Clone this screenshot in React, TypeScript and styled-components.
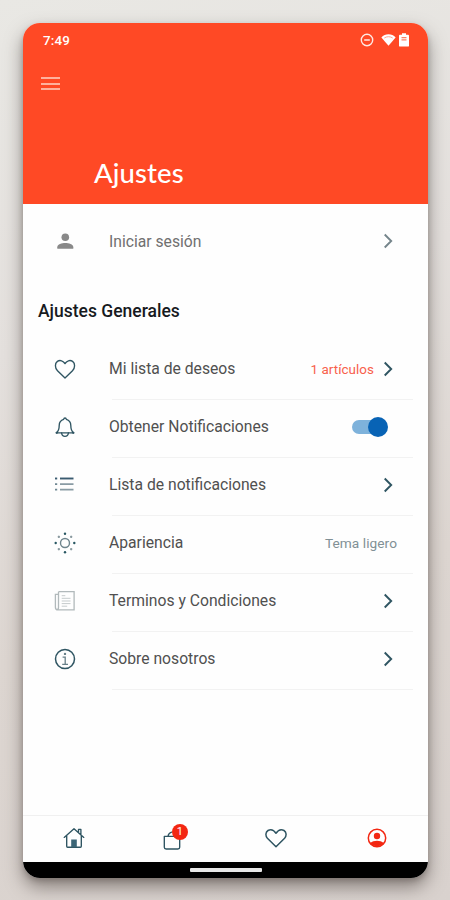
import React from "react";
import styled, { createGlobalStyle } from "styled-components";

const INK = "#2f5562";
const RED = "#f32712";

const GlobalStyle = createGlobalStyle`
  * { box-sizing: border-box; }
  body { margin: 0; font-family: Roboto, "Liberation Sans", sans-serif; }
  svg { display: block; flex: none; }
`;

const Stage = styled.main`
  width: 450px;
  height: 900px;
  padding: 23px 22px 22px 23px;
  overflow: hidden;
  background: linear-gradient(165deg, #e9e8e4 0%, #e4e0dd 35%, #ddd6d1 65%, #d9d2ce 100%);
`;

const Phone = styled.div`
  width: 405px;
  height: 855px;
  display: flex;
  flex-direction: column;
  overflow: hidden;
  border-radius: 17px;
  background: #fefefe;
  box-shadow: 0 9px 18px rgba(70, 60, 56, 0.55), 0 3px 5px rgba(70, 60, 56, 0.25);
`;

const Header = styled.header`
  height: 181px;
  flex: none;
  display: flex;
  flex-direction: column;
  background: #ff4925;
  color: #fff;
`;

const StatusBar = styled.div`
  height: 34px;
  padding: 0 19px 0 20px;
  display: flex;
  align-items: center;
`;

const Clock = styled.span`
  flex: 1;
  padding-top: 1px;
  font-size: 13.4px;
  line-height: 14px;
  font-weight: 500;
  letter-spacing: 0.2px;
`;

const StatusIcons = styled.div`
  display: flex;
  align-items: center;
  gap: 3px;

  svg:first-child {
    margin-right: 4px;
  }
`;

const MenuButton = styled.div`
  width: 19px;
  height: 13px;
  margin: 20px 0 0 18px;
  display: flex;
  flex-direction: column;
  justify-content: space-between;
`;

const MenuLine = styled.span`
  height: 2px;
  background: #ffb19d;
`;

const Title = styled.h1`
  margin: auto 0 14px 71px;
  font-family: Lato, "Open Sans", sans-serif;
  font-size: 27.5px;
  line-height: 34px;
  font-weight: 500;
  letter-spacing: 0.1px;
`;

const Content = styled.section`
  flex: 1;
`;

const Row = styled.div<{ $height: number }>`
  height: ${(p) => p.$height}px;
  padding-left: 30px;
  display: flex;
  align-items: stretch;
`;

const IconCell = styled.div<{ $lift?: boolean }>`
  width: 24px;
  padding-bottom: ${(p) => (p.$lift ? 5 : 0)}px;
  display: flex;
  align-items: center;
  justify-content: center;
`;

const RowBody = styled.div<{ $divided?: boolean }>`
  flex: 1;
  margin: 0 15px 0 35px;
  padding: 0 16px ${(p) => (p.$divided ? 3 : 0)}px 0;
  display: flex;
  align-items: center;
  justify-content: space-between;
  border-bottom: ${(p) => (p.$divided ? "1px solid #f2f2f2" : "none")};
`;

const Label = styled.span<{ $soft?: boolean }>`
  margin-left: -3px;
  padding-top: ${(p) => (p.$soft ? 1 : 0)}px;
  font-size: 15.7px;
  line-height: 20px;
  color: ${(p) => (p.$soft ? "#707070" : "#505050")};
`;

const Trailing = styled.div`
  display: flex;
  align-items: center;
`;

const Count = styled.span`
  margin-right: 9px;
  font-size: 13.4px;
  letter-spacing: 0.05px;
  color: #f8604c;
`;

const Theme = styled.span`
  font-size: 13.7px;
  letter-spacing: 0.05px;
  color: #819095;
`;

const SectionTitle = styled.h2`
  height: 64px;
  margin: 0;
  padding: 2px 0 0 15px;
  display: flex;
  align-items: center;
  font-size: 17.5px;
  font-weight: 500;
  color: #171a1e;
`;

const Toggle = styled.div`
  margin-right: 9px;
  display: flex;
  align-items: center;
`;

const Track = styled.span`
  width: 26px;
  height: 14px;
  margin-right: -10px;
  border-radius: 7px 0 0 7px;
  background: #7eb2db;
`;

const Knob = styled.span`
  width: 20px;
  height: 20px;
  border-radius: 50%;
  background: #0863b5;
`;

const NavBar = styled.nav`
  height: 47px;
  padding-bottom: 3px;
  display: grid;
  grid-template-columns: repeat(4, 1fr);
  border-top: 1px solid #f0f0f0;
`;

const NavItem = styled.div`
  display: flex;
  align-items: center;
  justify-content: center;
`;

const BagWrap = styled.div`
  position: relative;
  margin: 4px 6px 0 0;
`;

const Badge = styled.span`
  position: absolute;
  left: 9px;
  top: -6px;
  width: 16px;
  height: 16px;
  border-radius: 50%;
  background: ${RED};
  color: #fff;
  font-size: 11px;
  line-height: 16px;
  text-align: center;
`;

const GestureBar = styled.footer`
  height: 16px;
  display: flex;
  justify-content: center;
  align-items: center;
  background: #000;
`;

const GesturePill = styled.span`
  width: 72px;
  height: 4px;
  border-radius: 1px;
  background: #e8e8e8;
`;

const ChevronSvg = styled.svg`
  margin-right: 4px;
`;

const stroke = { fill: "none", stroke: INK, strokeWidth: 1.35, strokeLinejoin: "round" as const, strokeLinecap: "round" as const };

const Chevron = ({ color = INK }: { color?: string }) => (
  <ChevronSvg width="10" height="16" viewBox="0 0 10 16">
    <path d="M1.7 1.5 8.2 8l-6.5 6.5" fill="none" stroke={color} strokeWidth="1.9" />
  </ChevronSvg>
);

const PersonIcon = () => (
  <svg width="24" height="24" viewBox="0 0 24 24" fill="#898989">
    <circle cx="12.3" cy="8.3" r="3.8" />
    <path d="M4.3 19.8v-1.6c0-2.8 4.6-4.1 8-4.1s8 1.3 8 4.1v1.6z" />
  </svg>
);

const HeartIcon = ({ flat }: { flat?: boolean }) => (
  <svg width="22" height="22" viewBox="0 0 22 22">
    <path
      {...stroke}
      strokeWidth={flat ? 1.5 : 1.35}
      d={
        flat
          ? "M11 19.7 2.4 11.2C.2 8.8.5 5 3 3.5c2.8-1.6 6-.2 8 2.7 2-2.9 5.2-4.3 8-2.7 2.5 1.5 2.8 5.3.6 7.7z"
          : "M11 20 3.5 12.7C.7 9.9.8 5.4 3.4 3.4c2.6-1.8 6-.6 7.6 2.2 1.6-2.8 5-4 7.6-2.2 2.6 2 2.7 6.5-.1 9.3z"
      }
    />
  </svg>
);

const BellIcon = () => (
  <svg width="22" height="22" viewBox="0 0 22 22">
    <path {...stroke} d="M9.7 3.3c.2-1.8 2.4-1.8 2.6 0 3 .9 4.5 3.2 4.5 6.1 0 3.9.8 6 3 7.4H2.2c2.2-1.4 3-3.5 3-7.4 0-2.9 1.5-5.2 4.5-6.1z" />
    <path {...stroke} d="M7.6 17c.5 4.5 6.3 4.5 6.8 0" />
    <circle cx="2.8" cy="16.8" r="1.1" fill={INK} />
    <circle cx="19.2" cy="16.8" r="1.1" fill={INK} />
  </svg>
);

const ListIcon = () => (
  <svg width="20" height="16" viewBox="0 0 20 16">
    <path d="M5 1.5h13.5" stroke="#3a5b70" strokeWidth="1.9" />
    <path d="M5 7.1h13.5M5 12.6h13.5" stroke="#899ba4" strokeWidth="1.6" />
    <path d="M0 1.5h2.2" stroke="#3a5b70" strokeWidth="1.9" />
    <path d="M0 7.1h2.2M0 12.6h2.2" stroke="#6f8792" strokeWidth="1.8" />
  </svg>
);

const SUN_DOTS = [0, 45, 90, 135, 180, 225, 270, 315];

const SunIcon = () => (
  <svg width="22" height="22" viewBox="0 0 22 22">
    <circle cx="11" cy="11" r="4.5" fill="none" stroke="#6f858d" strokeWidth="1.4" />
    {SUN_DOTS.map((a) => (
      <circle
        key={a}
        cx="11"
        cy={a % 90 ? 2.3 : 1.7}
        r="1.2"
        fill={a % 90 ? "#8a9aa0" : "#285762"}
        transform={`rotate(${a} 11 11)`}
      />
    ))}
  </svg>
);

const TermsIcon = () => (
  <svg width="22" height="22" viewBox="0 0 22 22" fill="none" stroke="#b1b9bb" strokeWidth="1.3">
    <path d="M4.5 1.7h15.6v18.2H4c-1.8 0-2.6-.9-2.6-2.6V4.4h3M4.5 1.7v15.8c0 1.3-.7 2.1-1.6 2.1" />
    <path d="M7.7 5.7h3.6M7.7 8.3h8.8M7.7 11h8.8M7.7 13.6h8.8M7.7 16.2h5.5" strokeWidth="1" stroke="#c5cbcc" />
  </svg>
);

const InfoIcon = () => (
  <svg width="22" height="22" viewBox="0 0 22 22" fill="none" stroke={INK}>
    <circle cx="11" cy="11" r="9.5" strokeWidth="1.5" />
    <path d="M8.6 9.2h2.6v7M8.2 16.3h5.8" stroke="#677f88" strokeWidth="1.3" />
    <circle cx="11" cy="5.9" r="1.2" fill="#677f88" stroke="none" />
  </svg>
);

const HomeIcon = () => (
  <svg width="22" height="22" viewBox="0 0 22 22">
    <path {...stroke} d="M1.2 10.4 11 1.7l9.8 8.7M3.7 8.5v10.8c0 .6.3.9.9.9h12.8c.6 0 .9-.3.9-.9V8.5M15.5 5V2.4h2.4v4.8" />
    <path d="M8.2 12.5h5.6v7.8H8.2z" fill="#3b6576" />
  </svg>
);

const BagIcon = () => (
  <svg width="18" height="20" viewBox="0 0 18 20">
    <path {...stroke} d="M1.3 6.4h15.4v10.8c0 1.2-.6 1.8-1.8 1.8H3.1c-1.2 0-1.8-.6-1.8-1.8zM5 6.3C5.3 4.3 6.4 2.8 8.6 2.2" />
  </svg>
);

const ProfileIcon = () => (
  <svg width="20" height="20" viewBox="0 0 20 20">
    <circle cx="10" cy="10" r="8.7" fill="none" stroke={RED} strokeWidth="1.5" />
    <circle cx="10" cy="8" r="3.2" fill={RED} />
    <path d="M3.4 15.1c3.2-3.1 10-3.1 13.2 0-2.8 4.4-10.4 4.4-13.2 0z" fill={RED} />
  </svg>
);

const DndIcon = () => (
  <svg width="14" height="14" viewBox="0 0 14 14" fill="none" stroke="#ffe9e3">
    <circle cx="7" cy="7" r="5.7" strokeWidth="1.4" />
    <path d="M4.2 7h5.6" strokeWidth="1.6" />
  </svg>
);

const WifiIcon = () => (
  <svg width="15" height="14" viewBox="0 0 16 14">
    <path d="M.4 4.3C4.3-.3 11.7-.3 15.6 4.3L8 13z" fill="#fff" />
    <path d="M3.5 4.9C6 3 10 3 12.5 4.9" fill="none" stroke="#ff9c86" strokeWidth="1" />
  </svg>
);

const BatteryIcon = () => (
  <svg width="10" height="14" viewBox="0 0 10 14">
    <path d="M3 .3h4v1.5h2.1c.5 0 .9.4.9.9v10c0 .5-.4.9-.9.9H.9c-.5 0-.9-.4-.9-.9v-10c0-.5.4-.9.9-.9H3z" fill="#fff" />
    <path d="M2.5 4.7h5M2.5 6.8h5" stroke="#ff8065" strokeWidth="1.2" />
  </svg>
);

interface Setting {
  label: string;
  icon: React.ReactNode;
  trailing: React.ReactNode;
}

const SETTINGS: Setting[] = [
  {
    label: "Mi lista de deseos",
    icon: <HeartIcon />,
    trailing: (
      <>
        <Count>1 artículos</Count>
        <Chevron />
      </>
    ),
  },
  {
    label: "Obtener Notificaciones",
    icon: <BellIcon />,
    trailing: (
      <Toggle>
        <Track />
        <Knob />
      </Toggle>
    ),
  },
  { label: "Lista de notificaciones", icon: <ListIcon />, trailing: <Chevron /> },
  { label: "Apariencia", icon: <SunIcon />, trailing: <Theme>Tema ligero</Theme> },
  { label: "Terminos y Condiciones", icon: <TermsIcon />, trailing: <Chevron /> },
  { label: "Sobre nosotros", icon: <InfoIcon />, trailing: <Chevron /> },
];

export default function App() {
  return (
    <>
      <GlobalStyle />
      <Stage>
        <Phone>
          <Header>
            <StatusBar>
              <Clock>7:49</Clock>
              <StatusIcons>
                <DndIcon />
                <WifiIcon />
                <BatteryIcon />
              </StatusIcons>
            </StatusBar>
            <MenuButton>
              <MenuLine />
              <MenuLine />
              <MenuLine />
            </MenuButton>
            <Title>Ajustes</Title>
          </Header>
          <Content>
            <Row $height={74}>
              <IconCell>
                <PersonIcon />
              </IconCell>
              <RowBody>
                <Label $soft>Iniciar sesión</Label>
                <Chevron color="#75858b" />
              </RowBody>
            </Row>
            <SectionTitle>Ajustes Generales</SectionTitle>
            {SETTINGS.map((s) => (
              <Row key={s.label} $height={58}>
                <IconCell $lift>{s.icon}</IconCell>
                <RowBody $divided>
                  <Label>{s.label}</Label>
                  <Trailing>{s.trailing}</Trailing>
                </RowBody>
              </Row>
            ))}
          </Content>
          <NavBar>
            <NavItem>
              <HomeIcon />
            </NavItem>
            <NavItem>
              <BagWrap>
                <BagIcon />
                <Badge>1</Badge>
              </BagWrap>
            </NavItem>
            <NavItem>
              <HeartIcon flat />
            </NavItem>
            <NavItem>
              <ProfileIcon />
            </NavItem>
          </NavBar>
          <GestureBar>
            <GesturePill />
          </GestureBar>
        </Phone>
      </Stage>
    </>
  );
}
